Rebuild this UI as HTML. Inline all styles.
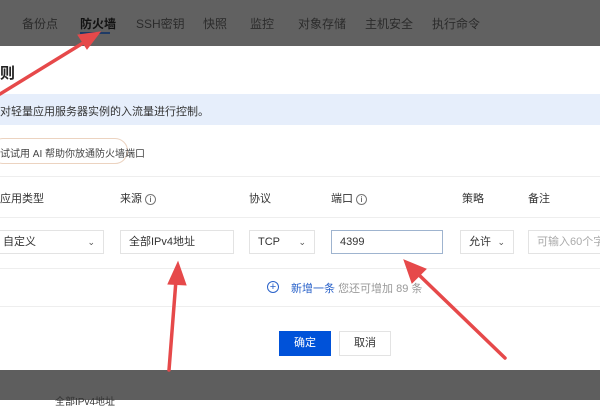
<!DOCTYPE html>
<html><head><meta charset="utf-8"><style>
*{margin:0;padding:0;box-sizing:border-box}
body{width:600px;height:400px;overflow:hidden;position:relative;background:#fff;font-family:"Liberation Sans","Noto Sans CJK SC",sans-serif;font-size:11px;color:#333}
.a{position:absolute;white-space:nowrap}
.tab{top:15px;font-size:12px;color:#2b2b2b}
.inp{position:absolute;top:230px;height:24px;border:1px solid #e3e3e3;background:#fff;padding:0 8px;line-height:22px;font-size:11px;color:#333;overflow:hidden;white-space:nowrap}
.chev{position:absolute;right:8px;top:0;font-size:9px;color:#555}
.hdr{top:190px;font-size:11px;color:#333}
</style></head><body>
<div class="a" style="left:0;top:0;width:600px;height:46px;background:#616161"></div>
<div class="a tab" style="left:22px">备份点</div>
<div class="a tab" style="left:80px;font-weight:bold;color:#111">防火墙</div>
<div class="a" style="left:80px;top:32px;width:30px;height:2px;background:#1f3b66"></div>
<div class="a tab" style="left:136px">SSH密钥</div>
<div class="a tab" style="left:203px">快照</div>
<div class="a tab" style="left:250px">监控</div>
<div class="a tab" style="left:298px">对象存储</div>
<div class="a tab" style="left:365px">主机安全</div>
<div class="a tab" style="left:432px">执行命令</div>

<div class="a" style="left:0;top:62px;font-size:15px;font-weight:bold;color:#222">则</div>
<div class="a" style="left:0;top:94px;width:600px;height:31px;background:#e6eefb"></div>
<div class="a" style="left:0;top:103px;font-size:11px;color:#333">对轻量应用服务器实例的入流量进行控制。</div>
<div class="a" style="left:-10px;top:138px;width:138px;height:26px;border:1px solid #ecd3c0;border-radius:13px"></div>
<div class="a" style="left:0;top:145px;font-size:10px;color:#444">试试用 AI 帮助你放通防火墙端口</div>
<div class="a" style="left:0;top:176px;width:600px;height:1px;background:#eee"></div>
<div class="a hdr" style="left:0">应用类型</div>
<div class="a hdr" style="left:120px">来源 <span style="display:inline-block;width:11px;height:11px;border:1px solid #777;border-radius:50%;font-size:8px;line-height:9px;text-align:center">i</span></div>
<div class="a hdr" style="left:249px">协议</div>
<div class="a hdr" style="left:331px">端口 <span style="display:inline-block;width:11px;height:11px;border:1px solid #777;border-radius:50%;font-size:8px;line-height:9px;text-align:center">i</span></div>
<div class="a hdr" style="left:462px">策略</div>
<div class="a hdr" style="left:528px">备注</div>
<div class="a" style="left:0;top:217px;width:600px;height:1px;background:#eee"></div>
<div class="inp" style="left:-6px;width:110px;padding-left:8px">自定义<span class="chev">&#8964;</span></div>
<div class="inp" style="left:120px;width:114px">全部IPv4地址</div>
<div class="inp" style="left:249px;width:66px">TCP<span class="chev">&#8964;</span></div>
<div class="inp" style="left:331px;width:112px;border-color:#9fb4cf">4399</div>
<div class="inp" style="left:460px;width:54px">允许<span class="chev">&#8964;</span></div>
<div class="inp" style="left:528px;width:80px;color:#aaa">可输入60个字符</div>
<div class="a" style="left:0;top:268px;width:600px;height:1px;background:#eee"></div>
<div class="a" style="left:267px;top:281px;width:12px;height:12px;border:1px solid #2a62c9;border-radius:50%;color:#2a62c9;font-size:11px;line-height:10px;text-align:center">+</div>
<div class="a" style="left:291px;top:280px;font-size:11px;color:#2a62c9">新增一条 <span style="color:#999">您还可增加 89 条</span></div>
<div class="a" style="left:0;top:306px;width:600px;height:1px;background:#eee"></div>
<div class="a" style="left:279px;top:331px;width:52px;height:25px;background:#0052d9;color:#fff;text-align:center;line-height:25px">确定</div>
<div class="a" style="left:339px;top:331px;width:52px;height:25px;border:1px solid #e3e3e3;text-align:center;line-height:23px">取消</div>
<div class="a" style="left:0;top:370px;width:600px;height:30px;background:#5e5e5e"></div>
<div class="a" style="left:55px;top:393px;font-size:10px;color:#333">全部IPv4地址</div>

<svg class="a" style="left:0;top:0" width="600" height="400">
<g stroke="#e6494a" stroke-width="3.5" fill="#e6494a" stroke-linecap="round">
<line x1="0" y1="94" x2="88" y2="40"/>
<polygon points="100,32 78,35 87,49" stroke-width="1"/>
<line x1="169" y1="370" x2="176" y2="280"/>
<polygon points="178,262 168,284 186,285" stroke-width="1"/>
<line x1="505" y1="358" x2="418" y2="274"/>
<polygon points="404,260 412,283 426,269" stroke-width="1"/>
</g></svg>
</body></html>
